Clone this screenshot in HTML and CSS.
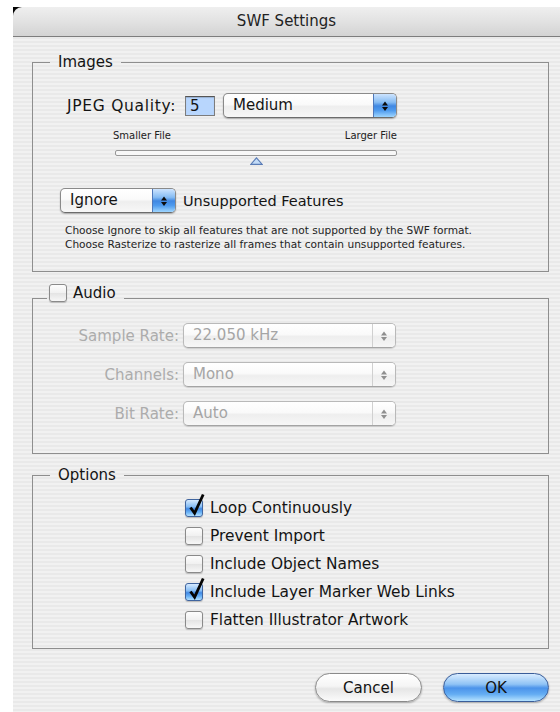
FILE: index.html
```html
<!DOCTYPE html>
<html lang="en">
<head>
<meta charset="utf-8">
<title>SWF Settings</title>
<link rel="stylesheet" href="styles.css">
</head>
<body>
<div class="window">
  <div class="titlebar">SWF Settings</div>
  <div class="content">

    <fieldset class="group group-images">
      <legend class="legend">Images</legend>
      <div class="quality-row">
        <span class="quality-label">JPEG Quality:</span>
        <span class="num-field">5</span>
        <div class="popup popup-quality">
          <span class="popup-value">Medium</span>
          <span class="popup-arrows"><svg viewBox="0 0 8 12" width="8" height="12"><path d="M4 1.5 7 5.5H1Z"/><path d="M1 7H7L4 11Z"/></svg></span>
        </div>
      </div>
      <div class="slider">
        <div class="slider-labels"><span>Smaller File</span><span>Larger File</span></div>
        <div class="slider-track"></div>
        <svg class="slider-thumb" viewBox="0 0 13 8" width="13" height="8"><path d="M6.5 0.8 12.2 7.4H0.8Z"/></svg>
      </div>
      <div class="unsupported-row">
        <div class="popup popup-unsupported">
          <span class="popup-value">Ignore</span>
          <span class="popup-arrows"><svg viewBox="0 0 8 12" width="8" height="12"><path d="M4 1.5 7 5.5H1Z"/><path d="M1 7H7L4 11Z"/></svg></span>
        </div>
        <span class="unsupported-label">Unsupported Features</span>
      </div>
      <p class="hint">Choose Ignore to skip all features that are not supported by the SWF format.<br>Choose Rasterize to rasterize all frames that contain unsupported features.</p>
    </fieldset>

    <fieldset class="group group-audio">
      <legend class="legend legend-check">
        <span class="legend-inner"><span class="checkbox"></span><span>Audio</span></span>
      </legend>
      <div class="audio-grid">
        <span class="audio-label">Sample Rate:</span>
        <div class="popup popup-disabled">
          <span class="popup-value">22.050 kHz</span>
          <span class="popup-arrows"><svg viewBox="0 0 8 12" width="8" height="12"><path d="M4 1.5 7 5.5H1Z"/><path d="M1 7H7L4 11Z"/></svg></span>
        </div>
        <span class="audio-label">Channels:</span>
        <div class="popup popup-disabled">
          <span class="popup-value">Mono</span>
          <span class="popup-arrows"><svg viewBox="0 0 8 12" width="8" height="12"><path d="M4 1.5 7 5.5H1Z"/><path d="M1 7H7L4 11Z"/></svg></span>
        </div>
        <span class="audio-label">Bit Rate:</span>
        <div class="popup popup-disabled">
          <span class="popup-value">Auto</span>
          <span class="popup-arrows"><svg viewBox="0 0 8 12" width="8" height="12"><path d="M4 1.5 7 5.5H1Z"/><path d="M1 7H7L4 11Z"/></svg></span>
        </div>
      </div>
    </fieldset>

    <fieldset class="group group-options">
      <legend class="legend">Options</legend>
      <ul class="option-list">
        <li class="option"><span class="checkbox checked"><svg class="checkmark" viewBox="0 0 20 24" width="20" height="24"><path d="M4.5 14.5 8.6 20.2 17.2 1.5"/></svg></span><span>Loop Continuously</span></li>
        <li class="option"><span class="checkbox"></span><span>Prevent Import</span></li>
        <li class="option"><span class="checkbox"></span><span>Include Object Names</span></li>
        <li class="option"><span class="checkbox checked"><svg class="checkmark" viewBox="0 0 20 24" width="20" height="24"><path d="M4.5 14.5 8.6 20.2 17.2 1.5"/></svg></span><span>Include Layer Marker Web Links</span></li>
        <li class="option"><span class="checkbox"></span><span>Flatten Illustrator Artwork</span></li>
      </ul>
    </fieldset>

    <div class="buttons">
      <span class="button">Cancel</span>
      <span class="button button-default">OK</span>
    </div>

  </div>
</div>
</body>
</html>
```

FILE: styles.css
```css
* {
  box-sizing: border-box;
}

html,
body {
  margin: 0;
  padding: 0;
}

body {
  width: 560px;
  height: 712px;
  overflow: hidden;
  background: #ffffff;
  font-family: "DejaVu Sans", "Liberation Sans", sans-serif;
  color: #141414;
}

/* ---------- window chrome ---------- */

.window {
  position: relative;
  margin: 7px 0 0 13px;
  width: 547px;
  height: 705px;
  background: repeating-linear-gradient(to bottom, #f1f1f1 0 2px, #e9e9e9 2px 4px);
}

/* dark sliver behind the rounded top-left corner */
.window::before {
  content: "";
  position: absolute;
  left: 0;
  top: 0;
  width: 9px;
  height: 9px;
  background: #050505;
}

.titlebar {
  position: relative;
  height: 30px;
  border-top-left-radius: 9px;
  background: linear-gradient(#efefef, #e2e2e2 50%, #d3d3d3);
  border-bottom: 1px solid #7d7d7d;
  text-align: center;
  font-size: 15px;
  line-height: 29px;
  color: #222;
}

.content {
  padding: 16px 11px 0 19px;
}

/* ---------- group boxes ---------- */

.group {
  margin: 0;
  padding: 0;
  min-width: 0;
  border: 1px solid #8e8e8e;
}

.group + .group {
  margin-top: 12px;
}

.legend {
  margin-left: 17px;
  padding: 0 8px;
  font-size: 15px;
  line-height: 18px;
}

.legend-check {
  margin-left: 14px;
  padding: 0 8px 10px 2px;
}

.legend-inner {
  display: flex;
  align-items: center;
  gap: 6px;
}

/* ---------- images ---------- */

.group-images {
  padding-bottom: 20px;
}

.quality-row {
  display: flex;
  align-items: center;
  margin: 22px 0 0 34px;
}

.quality-label {
  width: 114px;
  font-size: 15.5px;
  letter-spacing: 0.7px;
  white-space: nowrap;
}

.num-field {
  width: 30px;
  height: 20px;
  margin-left: 4px;
  padding-left: 4px;
  border: 1px solid #7c7c7c;
  border-top-color: #555;
  background: #b8d6fd;
  box-shadow: inset 0 1px 1px rgba(0, 0, 0, 0.18);
  font-size: 15px;
  line-height: 19px;
}

.popup-quality {
  width: 174px;
  height: 24px;
  margin-left: 8px;
}

.slider {
  width: 284px;
  margin: 11px 0 0 80px;
}

.slider-labels {
  display: flex;
  justify-content: space-between;
  font-size: 10px;
  line-height: 14px;
  color: #222;
}

.slider-track {
  width: 282px;
  height: 6px;
  margin: 7px 0 0 2px;
  border: 1px solid #979797;
  border-radius: 2px;
  background: #f7f7f7;
}

.slider-thumb {
  display: block;
  margin: 1px 0 0 137px;
  fill: #c2dbf7;
  stroke: #5a7cb6;
  stroke-width: 1.1;
}

.unsupported-row {
  display: flex;
  align-items: center;
  margin: 23px 0 0 27px;
}

.popup-unsupported {
  width: 116px;
}

.unsupported-label {
  margin-left: 7px;
  font-size: 14.5px;
}

.hint {
  margin: 10px 0 0 32px;
  font-size: 10.6px;
  line-height: 14px;
  color: #1e1e1e;
  white-space: nowrap;
}

/* ---------- pop-up menus ---------- */

.popup {
  display: flex;
  height: 25px;
  border: 1px solid #8a8a8a;
  border-bottom-color: #6c6c6c;
  border-radius: 5px;
  background: linear-gradient(#ffffff 0%, #fafafa 45%, #eeeeee 55%, #f7f7f7 100%);
  box-shadow: 0 1px 1.5px rgba(0, 0, 0, 0.28);
  overflow: hidden;
}

.popup-value {
  flex: 1;
  padding-left: 9px;
  font-size: 15px;
  line-height: 22px;
  white-space: nowrap;
}

.popup-arrows {
  width: 23px;
  display: flex;
  align-items: center;
  justify-content: center;
  border-left: 1px solid #4f78ba;
  background: linear-gradient(#cde4ff 0%, #86bcf3 36%, #3f87e2 52%, #4f9bee 72%, #9fd6ff 100%);
  fill: #0c0c0c;
}

.popup-disabled {
  border-color: #b9b9b9;
  border-bottom-color: #a4a4a4;
  box-shadow: 0 1px 1px rgba(0, 0, 0, 0.14);
}

.popup-disabled .popup-value {
  color: #a5a5a5;
}

.popup-disabled .popup-arrows {
  border-left-color: #d0d0d0;
  background: linear-gradient(#ffffff 0%, #f8f8f8 45%, #eeeeee 55%, #f6f6f6 100%);
  fill: #8f8f8f;
}

/* ---------- audio ---------- */

.group-audio {
  padding-bottom: 27px;
}

.audio-grid {
  display: grid;
  grid-template-columns: 146px 213px;
  column-gap: 4px;
  row-gap: 14px;
  align-items: center;
  margin-top: 11px;
}

.audio-label {
  text-align: right;
  font-size: 15px;
  color: #acacac;
}

/* ---------- checkboxes ---------- */

.checkbox {
  position: relative;
  flex: none;
  width: 18px;
  height: 18px;
  border: 1px solid #8a8a8a;
  border-radius: 3px;
  background: linear-gradient(#fdfdfd 0%, #f1f1f1 48%, #e4e4e4 52%, #f7f7f7 100%);
  box-shadow: 0 1px 1px rgba(0, 0, 0, 0.2);
}

.checkbox.checked {
  border-color: #40659f;
  background: linear-gradient(#d6eaff 0%, #86bdf4 42%, #3f88e4 55%, #6db4f6 78%, #b3e0ff 100%);
}

.checkmark {
  position: absolute;
  left: 0;
  top: -7px;
  fill: none;
  stroke: #050505;
  stroke-width: 2.8;
  stroke-linejoin: miter;
}

/* ---------- options ---------- */

.group-options {
  padding-bottom: 14px;
}

.option-list {
  list-style: none;
  margin: 10px 0 0 152px;
  padding: 0;
}

.option {
  display: flex;
  align-items: center;
  height: 28px;
  font-size: 15.4px;
}

.option .checkbox {
  margin-right: 7px;
}

/* ---------- buttons ---------- */

.buttons {
  display: flex;
  justify-content: flex-end;
  gap: 21px;
  margin-top: 24px;
}

.button {
  display: flex;
  align-items: center;
  justify-content: center;
  width: 107px;
  height: 29px;
  border: 1px solid #8a8a8a;
  border-radius: 15px;
  background: linear-gradient(#ffffff 0%, #f5f5f5 45%, #e6e6e6 55%, #fbfbfb 100%);
  box-shadow: 0 1px 2px rgba(0, 0, 0, 0.3);
  font-size: 15px;
  color: #111;
}

.button-default {
  width: 106px;
  border-color: #3a5d99;
  background: linear-gradient(#d9ecff 0%, #8fc3f5 38%, #4b93ea 52%, #64adf3 75%, #b6e3ff 100%);
}
```
